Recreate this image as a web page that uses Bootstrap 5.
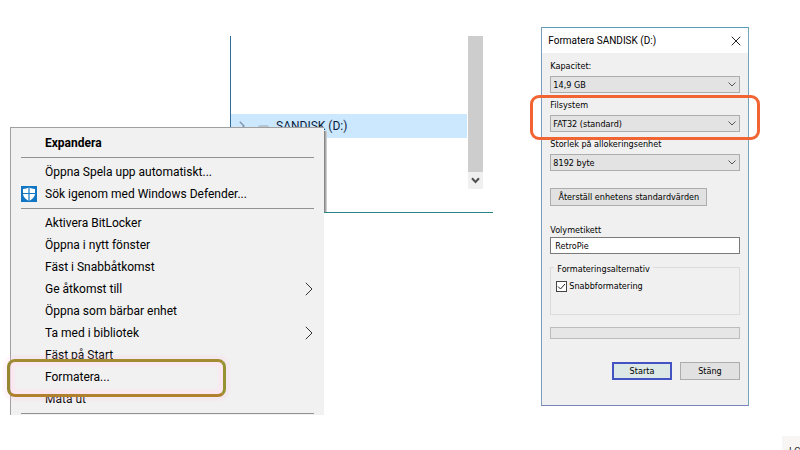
<!DOCTYPE html>
<html lang="sv">
<head>
<meta charset="utf-8">
<meta name="viewport" content="width=device-width, initial-scale=1">
<title>Formatera SANDISK (D:)</title>
<link rel="stylesheet" href="https://cdn.jsdelivr.net/npm/bootstrap@5.3.0/dist/css/bootstrap.min.css">
<style>
  body { font-family: Roboto, "Noto Sans", sans-serif; font-size: 12px; color: #000; background: #fff; }
  .desk { min-height: 100vh; overflow: hidden; }

  .explorer { margin: 36px 40px 0 230px; border-left: 1px solid #2f6c98; border-bottom: 1px solid #2a8587; padding: 0 10px 23px 0; }
  .tree { padding-top: 78px; margin-right: 1px; }
  .tree-item { height: 24px; padding-left: 8px; background: #cce8ff; color: #0b1b3a; line-height: 24px; }
  .drive-icon { width: 12px; margin: 0 6px 0 13px; }
  .scroll-track { width: 15px; background: #cdcdcd; }
  .scroll-down { height: 17px; background: #f0f0f0; }

  .ctx-menu { left: 10px; top: 127px; width: 314px; padding: 4px 10px 1px; background: #f1f1f1; border: 1px solid #a0a0a0; border-right: 0; border-bottom: 0; }
  .ctx-shade { left: 324px; top: 131px; width: 3px; height: 81px; background: linear-gradient(90deg, #777, #ddd); }
  .ctx-item { height: 22px; line-height: 22px; padding-right: 1px; color: #000; }
  .ctx-icon { width: 16px; margin-right: 8px; }
  .ctx-line { height: 1px; margin: 3px 0; background: #919191; }
  .ring-olive { left: -14px; top: -7px; width: 219px; height: 38px; border: 3px solid; border-color: #a38b32 #96922f #b0802f #96862f; border-radius: 8px; box-shadow: 0 0 2px 4px rgba(255, 200, 230, .2), inset 0 0 3px 4px rgba(255, 225, 240, .7); pointer-events: none; }

  .dialog { margin: 27px 51px 0 8px; border: 1px solid; border-color: #5a9ab8 #72a4ba #7a80bd #7d9cba; background: #f0f0f0; font-family: "DejaVu Sans Condensed", "DejaVu Sans", sans-serif; font-size: 9px; line-height: 14px; }
  .dialog-title { height: 25px; padding: 0 7px 0 6px; background: #fff; font-family: Roboto, "Noto Sans", sans-serif; font-size: 10px; }
  .dialog-main { padding: 6px 8px 25px; }
  .field { margin-bottom: 5px; }
  .field label { margin-bottom: 3px; }
  .drop { height: 17px; padding: 0 18px 0 2px; border: 1px solid #adadad; border-radius: 0; appearance: none; font-size: 9px; line-height: 14px; color: #000;
    background: #e3e3e3 url("data:image/svg+xml,%3Csvg xmlns='http://www.w3.org/2000/svg' viewBox='0 0 8 5'%3E%3Cpath d='M.5.5 4 4 7.5.5' fill='none' stroke='%23555'/%3E%3C/svg%3E") no-repeat right 3px center / 8px 5px; }
  .namebox { height: 17px; padding: 0 4px; border: 1px solid #7a7a7a; background: #fff; font-size: 9px; line-height: 14px; }
  .push { height: 18px; padding: 0; border: 1px solid #adadad; background: #e1e1e1; color: #000; font-size: 9px; line-height: 14px; }
  .push-reset { width: 157px; margin: 17px 0; }
  .push-pair { width: 60px; }
  .push-go { border: 2px solid #4453c4; background: #dce8e6; }
  .options { height: 48px; margin-top: 13px; padding: 11px 5px 0; border: 1px solid #dcdcdc; }
  .options legend { left: 3px; top: -6px; padding: 0 3px; background: #f0f0f0; font-size: 9px; line-height: 14px; }
  .tick { width: 11px; height: 11px; border: 1px solid #444; appearance: none;
    background: #fff url("data:image/svg+xml,%3Csvg xmlns='http://www.w3.org/2000/svg' viewBox='0 0 9 9'%3E%3Cpath d='M1 4.5 3.5 7 8 2' fill='none' stroke='%23222'/%3E%3C/svg%3E") center / 9px 9px; }
  .tick-row { gap: 2px; }
  .gauge { height: 12px; margin: 12px 0 23px; border: 1px solid #bcbcbc; border-radius: 0; background: #e6e6e6; }
  .ring-orange { left: -20px; right: -20px; top: -3px; height: 45px; border: 3px solid #f26532; border-radius: 9px; pointer-events: none; }

  .corner { width: 18px; height: 14px; overflow: hidden; background: #f8f6f5; font-size: 10px; line-height: 14px; padding: 9px 0 0 7px; color: #333; }
</style>
<script src="https://cdn.jsdelivr.net/npm/bootstrap@5.3.0/dist/js/bootstrap.bundle.min.js"></script>
</head>
<body>
<main class="desk position-relative">
  <div class="row g-0">
    <section class="col-8 position-relative">
      <div class="explorer d-flex">
        <div class="tree flex-grow-1">
          <div class="tree-item d-flex align-items-center">
            <svg width="6" height="10" viewBox="0 0 6 10" fill="none" stroke="#8095a8" stroke-width="1.4"><path d="M.8.8 5 5 .8 9.2"/></svg>
            <svg class="drive-icon" height="6" viewBox="0 0 12 6"><path d="M2 2h7l2 1v3H0V3z" fill="#b4c6d4"/></svg>
            <span>SANDISK (D:)</span>
          </div>
        </div>
        <div class="scroll-track d-flex flex-column justify-content-end">
          <div class="flex-grow-1" style="min-height:136px"></div>
          <div class="scroll-down d-flex align-items-center justify-content-center">
            <svg width="9" height="7" viewBox="0 0 9 7" fill="none" stroke="#505050" stroke-width="2"><path d="M1 1.2 4.5 5 8 1.2"/></svg>
          </div>
        </div>
      </div>

      <div class="ctx-shade position-absolute"></div>
      <nav class="ctx-menu position-absolute" aria-label="Snabbmeny">
        <a href="#" class="ctx-item d-flex text-decoration-none fw-bold"><span class="ctx-icon"></span>Expandera</a>
        <div class="ctx-line"></div>
        <a href="#" class="ctx-item d-flex text-decoration-none"><span class="ctx-icon"></span>Öppna Spela upp automatiskt...</a>
        <a href="#" class="ctx-item d-flex align-items-center text-decoration-none">
          <svg class="ctx-icon" height="16" viewBox="0 0 16 16"><path d="M0 0h16v16H0z" fill="#1177c4"/><path d="M8 1.2C6.400 2.300 4.200 2.800 2 2.900V7.500c0 3.300 2.600 5.700 6 7.400 3.400-1.700 6-4.100 6-7.400V2.900C11.800 2.800 9.600 2.300 8 1.200z" fill="#fff"/><path d="M8 1v14M2 7.500h12" stroke="#1177c4" stroke-width="1.200"/></svg>Sök igenom med Windows Defender...</a>
        <div class="ctx-line"></div>
        <a href="#" class="ctx-item d-flex text-decoration-none"><span class="ctx-icon"></span>Aktivera BitLocker</a>
        <a href="#" class="ctx-item d-flex text-decoration-none"><span class="ctx-icon"></span>Öppna i nytt fönster</a>
        <a href="#" class="ctx-item d-flex text-decoration-none"><span class="ctx-icon"></span>Fäst i Snabbåtkomst</a>
        <a href="#" class="ctx-item d-flex align-items-center text-decoration-none"><span class="ctx-icon"></span>Ge åtkomst till
          <svg class="ms-auto" width="8" height="14" viewBox="0 0 8 14" fill="none" stroke="#333"><path d="M.8.8 7 7 .8 13.200"/></svg></a>
        <a href="#" class="ctx-item d-flex text-decoration-none"><span class="ctx-icon"></span>Öppna som bärbar enhet</a>
        <a href="#" class="ctx-item d-flex align-items-center text-decoration-none"><span class="ctx-icon"></span>Ta med i bibliotek
          <svg class="ms-auto" width="8" height="14" viewBox="0 0 8 14" fill="none" stroke="#333"><path d="M.8.8 7 7 .8 13.200"/></svg></a>
        <a href="#" class="ctx-item d-flex text-decoration-none"><span class="ctx-icon"></span>Fäst på Start</a>
        <a href="#" class="ctx-item d-flex position-relative z-1 text-decoration-none"><span class="ctx-icon"></span>Formatera...<span class="ring-olive position-absolute"></span></a>
        <a href="#" class="ctx-item d-flex text-decoration-none"><span class="ctx-icon"></span>Mata ut</a>
        <div class="ctx-line mb-0"></div>
      </nav>
    </section>

    <section class="col-4">
      <form class="dialog">
        <div class="dialog-title d-flex align-items-center justify-content-between">
          <span>Formatera SANDISK (D:)</span>
          <button type="button" class="border-0 bg-transparent p-0 d-flex" aria-label="Stäng fönstret">
            <svg width="10" height="10" viewBox="0 0 10 10" stroke="#222"><path d="M.7.7 9.300 9.300M9.300.7.7 9.300"/></svg>
          </button>
        </div>
        <div class="dialog-main">
          <div class="field">
            <label class="d-block" for="cap">Kapacitet:</label>
            <select id="cap" class="drop d-block w-100"><option>14,9 GB</option></select>
          </div>
          <div class="field position-relative">
            <label class="d-block" for="fs">Filsystem</label>
            <select id="fs" class="drop d-block w-100"><option>FAT32 (standard)</option></select>
            <span class="ring-orange position-absolute z-1"></span>
          </div>
          <div class="field">
            <label class="d-block" for="alloc">Storlek på allokeringsenhet</label>
            <select id="alloc" class="drop d-block w-100"><option>8192 byte</option></select>
          </div>
          <button type="button" class="push push-reset d-block">Återställ enhetens standardvärden</button>
          <label class="d-block" for="vol">Volymetikett</label>
          <input id="vol" type="text" class="namebox d-block w-100" value="RetroPie">
          <fieldset class="options position-relative">
            <legend class="position-absolute w-auto m-0">Formateringsalternativ</legend>
            <div class="tick-row d-flex align-items-center">
              <input id="quick" type="checkbox" class="tick m-0" checked>
              <label for="quick">Snabbformatering</label>
            </div>
          </fieldset>
          <div class="gauge progress" role="progressbar" aria-label="Förlopp" aria-valuenow="0" aria-valuemin="0" aria-valuemax="100"></div>
          <div class="d-flex justify-content-end gap-2">
            <button type="button" class="push push-pair push-go">Starta</button>
            <button type="button" class="push push-pair">Stäng</button>
          </div>
        </div>
      </form>
    </section>
  </div>
  <div class="corner position-absolute bottom-0 end-0">LG</div>
</main>
</body>
</html>
